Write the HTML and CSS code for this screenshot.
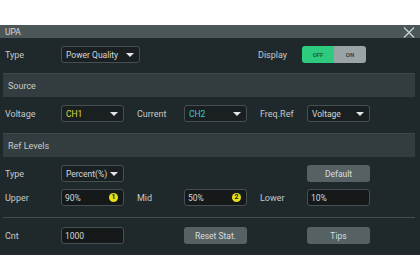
FILE: index.html
```html
<!DOCTYPE html>
<html lang="en">
<head>
    <meta charset="UTF-8" />
    <title>UPA</title>
    <link rel="stylesheet" href="styles.css">
</head>
<body>
<div class="panel">
    <div class="title-bar">
        <span>UPA</span>
        <svg class="close" width="14" height="11" viewBox="0 0 14 11"><path d="M2 0.5 L12 10.5 M12 0.5 L2 10.5" stroke="#c9cfd1" stroke-width="1.3"/></svg>
    </div>

    <div class="row first">
        <label>Type</label>
        <div class="select">Power Quality <i class="caret"></i></div>
        <label class="display-label">Display</label>
        <div class="toggle"><span class="off">OFF</span><span class="on">ON</span></div>
    </div>

    <div class="section">Source</div>
    <div class="row src">
        <label>Voltage</label>
        <div class="select ch1">CH1 <i class="caret"></i></div>
        <label class="mid">Current</label>
        <div class="select ch2">CH2 <i class="caret"></i></div>
        <label class="mid">Freq.Ref</label>
        <div class="select">Voltage <i class="caret"></i></div>
    </div>

    <div class="section">Ref Levels</div>
    <div class="row ref-type">
        <label>Type</label>
        <div class="select">Percent(%) <i class="caret"></i></div>
        <span></span><span></span><span></span>
        <button>Default</button>
    </div>
    <div class="row levels">
        <label>Upper</label>
        <div class="input">90% <b class="badge">1</b></div>
        <label class="mid">Mid</label>
        <div class="input">50% <b class="badge">2</b></div>
        <label class="mid">Lower</label>
        <div class="input">10%</div>
    </div>
    <hr>
    <div class="row cnt">
        <label>Cnt</label>
        <div class="input">1000</div>
        <span></span>
        <button>Reset Stat.</button>
        <span></span>
        <button>Tips</button>
    </div>
</div>
</body>
</html>
```

FILE: styles.css
```css
body {
    margin: 0;
    background: #fff;
    font-family: Roboto, "Liberation Sans", sans-serif;
    font-size: 9px;
}

.panel {
    margin-top: 25px;
    width: 420px;
    height: 230px;
    background: #1f292b;
    color: #c3c9cb;
}

.title-bar {
    height: 13px;
    background: #4b5658;
    display: flex;
    align-items: center;
    justify-content: space-between;
    padding: 0 4px 0 5px;
    font-size: 8.5px;
    color: #d4d9da;
}

.close {
    margin-top: 1px;
}

.row {
    display: grid;
    grid-template-columns: 56px 63px 60px 63px 60px 63px;
    align-items: center;
    padding-left: 5px;
    height: 17px;
}

.row.first {
    grid-template-columns: 56px 79px 118px 44px 64px;
    margin: 8px 0 10px;
}

.row.src {
    margin: 8px 0 11px;
}

.row.ref-type {
    margin: 8px 0 7px;
}

.row.levels {
    margin: 7px 0 11px;
}

.row.cnt {
    margin-top: 9px;
}

label {
    font-size: 9px;
}

label.mid {
    padding-left: 13px;
}

.display-label {
    grid-column: 4;
}

.select, .input {
    box-sizing: border-box;
    height: 17px;
    border: 1px solid #465053;
    border-radius: 3px;
    background: #1a2022;
    display: flex;
    align-items: center;
    justify-content: space-between;
    padding: 0 5px 0 4px;
    color: #d3d8d9;
    font-size: 8.5px;
}

.input {
    background: #16191a;
    padding-left: 3px;
}

.caret {
    width: 0;
    height: 0;
    border-left: 4px solid transparent;
    border-right: 4px solid transparent;
    border-top: 4px solid #e2e6e7;
}

.ch1 { color: #dede45; }
.ch2 { color: #3fc8cf; }

.badge {
    width: 9px;
    height: 9px;
    border-radius: 50%;
    background: #e8df1a;
    color: #1a1a1a;
    font-size: 7px;
    line-height: 9px;
    text-align: center;
}

.toggle {
    display: flex;
    height: 17px;
    border-radius: 3px;
    overflow: hidden;
    font-size: 6px;
    font-weight: bold;
}

.toggle span {
    flex: 1;
    display: flex;
    align-items: center;
    justify-content: center;
}

.toggle .off {
    background: #2dcb7e;
    color: #16683f;
}

.toggle .on {
    background: #9aa3a5;
    color: #3a4244;
}

.section {
    margin: 0 5px 0 3px;
    height: 23px;
    border-top: 1px solid #3d474a;
    background: #333d40;
    display: flex;
    align-items: center;
    padding-left: 5px;
    font-size: 9px;
    color: #c6cccd;
}

button {
    height: 17px;
    border: none;
    border-radius: 3px;
    background: #566164;
    color: #d9dddf;
    font-family: Roboto, "Liberation Sans", sans-serif;
    font-size: 8.5px;
    padding: 0;
}

hr {
    margin: 0 5px 0 3px;
    border: none;
    border-top: 1px solid #434d50;
}
```
